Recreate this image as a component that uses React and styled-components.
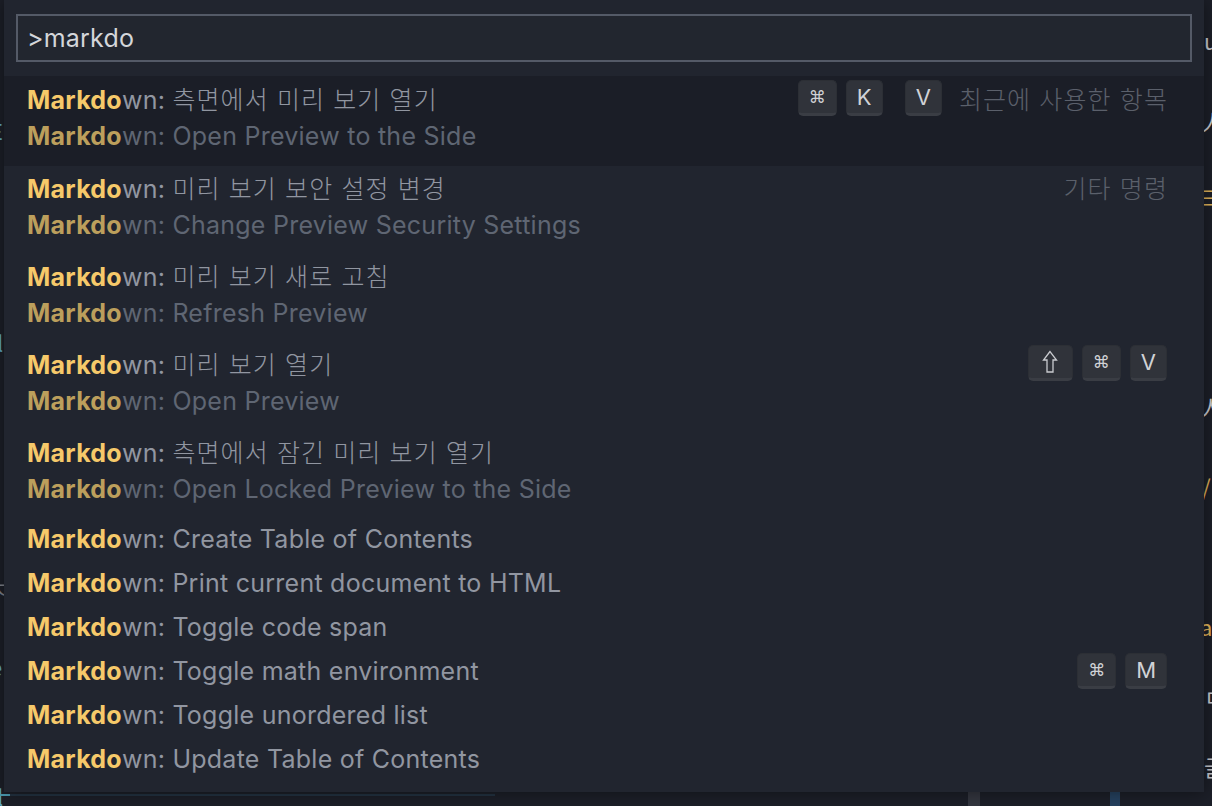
import React from 'react';
import styled, { createGlobalStyle } from 'styled-components';

const UI_FONT = `Inter, "Noto Sans CJK KR", sans-serif`;

const GlobalStyle = createGlobalStyle`
  html, body {
    margin: 0;
    padding: 0;
    background: #1b1e27;
    overflow: hidden;
  }
  body {
    font-family: ${UI_FONT};
  }
`;

const Page = styled.div`
  position: relative;
  width: 1212px;
  height: 806px;
  background: #1c1f28;
  overflow: hidden;
`;

/* editor behind the palette: only a sliver shows at each edge */
const EditorEdge = styled.div`
  position: absolute;
  top: 0;
  bottom: 0;
  ${({ side }) => (side === 'left' ? 'left: 0;' : 'right: 0;')}
  width: ${({ side }) => (side === 'left' ? 4 : 8)}px;
  display: flex;
  flex-direction: column;
  overflow: hidden;
`;

const Fragment = styled.div`
  font-family: "Noto Sans CJK KR", sans-serif;
  font-size: 22px;
  line-height: 24px;
  height: 24px;
  white-space: nowrap;
  color: ${({ color }) => color};
  margin-left: ${({ shift }) => shift}px;
`;

const BottomBar = styled.div`
  position: absolute;
  left: 0;
  right: 0;
  bottom: 0;
  height: 14px;
  display: flex;
  align-items: flex-start;
`;

const ScrollLine = styled.div`
  margin-top: 2px;
  width: 495px;
  height: 2px;
  background: linear-gradient(90deg, #4b9bb1 0, #4b9bb1 10px, #233241 10px);
`;

const Marker = styled.div`
  position: absolute;
  top: 0;
  left: ${({ x }) => x}px;
  width: ${({ w }) => w}px;
  height: 14px;
  background: ${({ color }) => color};
`;

const Palette = styled.div`
  position: absolute;
  left: 4px;
  top: 0;
  width: 1200px;
  height: 792px;
  background: #21252f;
  box-shadow: 0 0 16px rgba(0, 0, 0, 0.45);
  display: flex;
  flex-direction: column;
`;

const InputRow = styled.div`
  padding: 14px 12px 0 12px;
`;

const InputBox = styled.div`
  height: 48px;
  box-sizing: border-box;
  border: 2px solid #545a67;
  background: #22262f;
  display: flex;
  align-items: center;
  padding-left: 9px;
  font-size: 25px;
  color: #d4d6da;
  letter-spacing: 0.2px;
`;

const List = styled.div`
  margin-top: 14px;
  padding-top: 2px;
  display: flex;
  flex-direction: column;
`;

const Row = styled.div`
  box-sizing: border-box;
  height: ${({ twoLine }) => (twoLine ? 88 : 44)}px;
  padding: 0 37px 0 23px;
  display: flex;
  flex-direction: column;
  background: ${({ selected }) => (selected ? '#1b1e27' : 'transparent')};
  ${({ selected }) => selected && 'margin-top: -2px; padding-top: 1px; height: 90px;'}
`;

const LabelLine = styled.div`
  height: 42px;
  display: flex;
  align-items: center;
  gap: 16px;
`;

const Label = styled.div`
  flex: 1;
  font-size: 25px;
  white-space: nowrap;
  color: #9196a1;
  letter-spacing: 0.25px;
`;

const Hangul = styled.span`
  letter-spacing: 1.1px;
  font-weight: 300;
`;

const Detail = styled.div`
  height: 34px;
  display: flex;
  align-items: center;
  font-size: 25px;
  white-space: nowrap;
  color: #5f6673;
  letter-spacing: 0.25px;
`;

const Match = styled.span`
  font-weight: 700;
  color: ${({ dim }) => (dim ? '#bc9f5c' : '#f6c96a')};
`;

const Keys = styled.div`
  display: flex;
  align-items: center;
`;

const Chord = styled.div`
  display: flex;
  gap: 9px;
  & + & {
    margin-left: 22px;
  }
`;

const Key = styled.div`
  box-sizing: border-box;
  min-width: ${({ wide }) => (wide ? 45 : 37)}px;
  height: 36px;
  padding: 0 10px;
  display: flex;
  align-items: center;
  justify-content: center;
  background: #30333a;
  border: 1px solid #2c2f35;
  border-bottom: 3px solid #3a3d44;
  border-radius: 5px;
  color: #d0d2d6;
  font-size: 22px;
  font-family: Inter, sans-serif;
`;

const CmdGlyph = styled.span`
  font-family: "DejaVu Sans", sans-serif;
  font-size: 17px;
`;

const Description = styled.div`
  font-size: 25px;
  font-weight: 300;
  color: #5b606b;
  white-space: nowrap;
  margin-left: 1px;
  letter-spacing: 1.1px;
  margin-right: -1px;
`;

const ShiftIcon = () => (
  <svg width="16" height="24" viewBox="0 0 16 24" fill="none">
    <path d="M8 1.5 L1.5 10 H5 V22 H11 V10 H14.5 Z" stroke="#c9cbcf" strokeWidth="1.3" strokeLinejoin="miter" />
  </svg>
);

const renderKey = (k, i) => {
  if (k === 'cmd') return <Key key={i}><CmdGlyph>⌘</CmdGlyph></Key>;
  if (k === 'shift') return <Key key={i} wide><ShiftIcon /></Key>;
  return <Key key={i}>{k}</Key>;
};

const commands = [
  { label: '측면에서 미리 보기 열기', korean: true, detail: 'Open Preview to the Side', keys: [['cmd', 'K'], ['V']], desc: '최근에 사용한 항목', selected: true },
  { label: '미리 보기 보안 설정 변경', korean: true, detail: 'Change Preview Security Settings', desc: '기타 명령' },
  { label: '미리 보기 새로 고침', korean: true, detail: 'Refresh Preview' },
  { label: '미리 보기 열기', korean: true, detail: 'Open Preview', keys: [['shift', 'cmd', 'V']] },
  { label: '측면에서 잠긴 미리 보기 열기', korean: true, detail: 'Open Locked Preview to the Side' },
  { label: 'Create Table of Contents' },
  { label: 'Print current document to HTML' },
  { label: 'Toggle code span' },
  { label: 'Toggle math environment', keys: [['cmd', 'M']] },
  { label: 'Toggle unordered list' },
  { label: 'Update Table of Contents' },
];

const rightFragments = [
  { gap: 28, text: 'u', color: '#c8cad0', shift: 0 },
  { gap: 56, text: '人', color: '#c8cad0', shift: -2 },
  { gap: 52, text: '∋', color: '#e2b45a', shift: -4 },
  { gap: 186, text: '人', color: '#c8cad0', shift: -4 },
  { gap: 56, text: '/', color: '#e2b45a', shift: -2 },
  { gap: 116, text: 'a', color: '#e2b45a', shift: -4 },
  { gap: 46, text: 'ㄷ', color: '#c8cad0', shift: 0 },
  { gap: 46, text: '글', color: '#c8cad0', shift: 0 },
];

const leftFragments = [
  { gap: 118, text: 'E', color: '#5fa8c2', shift: -10 },
  { gap: 188, text: 'l', color: '#5fa8c2', shift: -3 },
  { gap: 222, text: 'ㅈ', color: '#7f838c', shift: -12 },
  { gap: 54, text: 'e', color: '#5fa8c2', shift: -10 },
  { gap: 106, text: 'l', color: '#5fa8c2', shift: -3 },
];

const EdgeSpacer = styled.div`
  flex: none;
`;

const Edge = ({ side, items }) => (
  <EditorEdge side={side}>
    {items.map((f, i) => (
      <React.Fragment key={i}>
        <EdgeSpacer style={{ height: f.gap }} />
        <Fragment color={f.color} shift={f.shift}>{f.text}</Fragment>
      </React.Fragment>
    ))}
  </EditorEdge>
);

export default function App() {
  return (
    <>
      <GlobalStyle />
      <Page>
        <Edge side="left" items={leftFragments} />
        <Edge side="right" items={rightFragments} />
        <BottomBar>
          <ScrollLine />
          <Marker x={968} w={12} color="#33363f" />
          <Marker x={1110} w={10} color="#25415f" />
        </BottomBar>
        <Palette>
          <InputRow>
            <InputBox>&gt;markdo</InputBox>
          </InputRow>
          <List>
            {commands.map((c, i) => (
              <Row key={i} twoLine={!!c.detail} selected={c.selected}>
                <LabelLine>
                  <Label>
                    <Match>Markdo</Match>wn: {c.korean ? <Hangul>{c.label}</Hangul> : c.label}
                  </Label>
                  {c.keys && (
                    <Keys>
                      {c.keys.map((chord, j) => (
                        <Chord key={j}>{chord.map(renderKey)}</Chord>
                      ))}
                    </Keys>
                  )}
                  {c.desc && <Description>{c.desc}</Description>}
                </LabelLine>
                {c.detail && (
                  <Detail>
                    <Match dim>Markdo</Match>wn: {c.detail}
                  </Detail>
                )}
              </Row>
            ))}
          </List>
        </Palette>
      </Page>
    </>
  );
}
